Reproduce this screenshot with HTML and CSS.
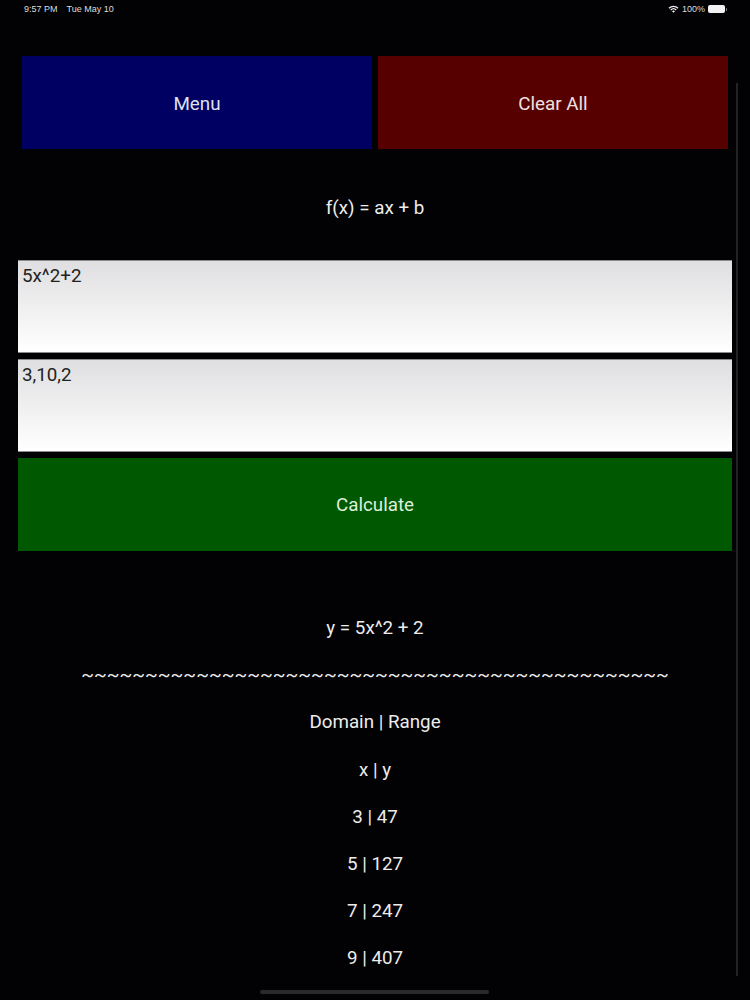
FILE: index.html
```html
<!DOCTYPE html>
<html lang="en">
<head>
<meta charset="utf-8">
<title>Function Calculator</title>
<link rel="stylesheet" href="styles.css">
</head>
<body>
<div class="screen">
  <header class="status">
    <div class="status-left"><span>9:57 PM</span><span>Tue May 10</span></div>
    <div class="status-right">
      <svg class="wifi" viewBox="0 0 12 9" width="11" height="8" aria-hidden="true">
        <path d="M0.4 3 A8 8 0 0 1 11.6 3 L10.5 4.1 A6.4 6.4 0 0 0 1.5 4.1 Z" fill="#eee"/>
        <path d="M2.4 5 A5.2 5.2 0 0 1 9.6 5 L8.5 6.1 A3.6 3.6 0 0 0 3.5 6.1 Z" fill="#eee"/>
        <path d="M4.3 6.9 A2.4 2.4 0 0 1 7.7 6.9 L6 8.7 Z" fill="#eee"/>
      </svg>
      <span>100%</span>
      <span class="battery"></span>
    </div>
  </header>
  <nav class="top-buttons">
    <div class="btn btn-menu">Menu</div>
    <div class="btn btn-clear">Clear All</div>
  </nav>
  <p class="formula">f(x) = ax + b</p>
  <section class="form">
    <div class="field">5x^2+2</div>
    <div class="field">3,10,2</div>
    <div class="btn btn-calc">Calculate</div>
  </section>
  <section class="results">
    <p>y = 5x^2 + 2</p>
    <p>~~~~~~~~~~~~~~~~~~~~~~~~~~~~~~~~~~~~~~~~~~~~~~</p>
    <p>Domain | Range</p>
    <p>x | y</p>
    <p>3 | 47</p>
    <p>5 | 127</p>
    <p>7 | 247</p>
    <p>9 | 407</p>
  </section>
  <div class="scrollbar"></div>
  <div class="home-bar"></div>
</div>
</body>
</html>
```
FILE: styles.css
```css
* { box-sizing: border-box; }
html, body { margin: 0; padding: 0; background: #000; }
.screen {
  position: relative;
  width: 750px;
  height: 1000px;
  overflow: hidden;
  background: #020103;
  color: #ececec;
  font-family: Roboto, "Liberation Sans", sans-serif;
  font-size: 18.8px;
  display: flex;
  flex-direction: column;
}
.status {
  height: 56px;
  padding: 3px 25px 0 24px;
  display: flex;
  justify-content: space-between;
  align-items: flex-start;
  font-size: 9px;
  line-height: 12px;
  color: #ddd;
  font-family: "Liberation Sans", sans-serif;
}
.status-left { display: flex; gap: 9px; }
.status-right { display: flex; align-items: center; gap: 3px; }
.battery {
  position: relative;
  width: 17px;
  height: 8px;
  border-radius: 2px;
  background: #f2f2f2;
  display: block;
}
.battery::after {
  content: "";
  position: absolute;
  left: 18px;
  top: 2.5px;
  width: 1px;
  height: 3px;
  background: #777;
}
.top-buttons {
  display: flex;
  gap: 6px;
  padding: 0 22px;
  height: 93px;
}
.btn {
  display: flex;
  align-items: center;
  justify-content: center;
  flex: 1;
  padding-top: 2px;
}
.btn-menu { background: #000062; color: #dfe0f2; }
.btn-clear { background: #560000; color: #f2e0e0; }
.formula {
  margin: 0;
  height: 110.5px;
  line-height: 118px;
  text-align: center;
}
.form {
  display: flex;
  flex-direction: column;
  gap: 6px;
  padding: 0 18px;
}
.field {
  height: 93px;
  padding: 4px 4px;
  line-height: 22px;
  color: #222;
  background: linear-gradient(#dfdfe1, #ffffff);
  border: 1px solid #8a8a8c;
  border-width: 1px 0;
}
.btn-calc {
  flex: none;
  height: 93px;
  background: #005800;
  color: #dcf0dc;
  padding-top: 1px;
}
.results {
  margin-top: 54.5px;
  text-align: center;
  display: flex;
  flex-direction: column;
}
.results p {
  margin: 0;
  height: 47.2px;
  line-height: 47px;
}
.scrollbar {
  position: absolute;
  left: 736px;
  top: 83px;
  width: 2px;
  height: 893px;
  background: #232325;
}
.home-bar {
  position: absolute;
  left: 260px;
  top: 990px;
  width: 229px;
  height: 4px;
  border-radius: 2px;
  background: #2a2a2e;
}
```
